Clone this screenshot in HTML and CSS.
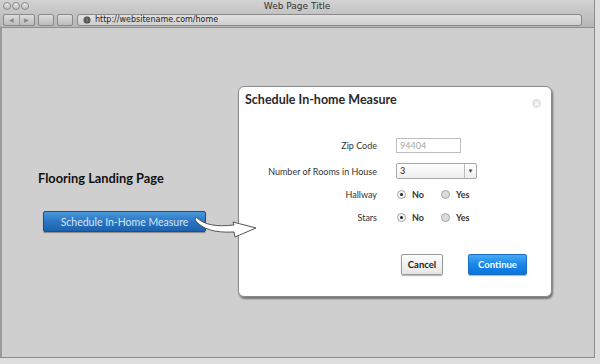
FILE: index.html
```html
<!DOCTYPE html>
<html lang="en">
<head>
  <meta charset="UTF-8">
  <title>Web Page Title</title>
  <link rel="stylesheet" href="styles.css">
</head>
<body>
  <div class="window">
    <div class="chrome">
      <div class="titlebar">
        <div class="lights"><span></span><span></span><span></span></div>
        <div class="title">Web Page Title</div>
        <div></div>
      </div>
      <div class="toolbar">
        <div class="nav"><span>&#9664;</span><span>&#9654;</span></div>
        <span class="tool"></span>
        <span class="tool"></span>
        <div class="url">
          <svg class="globe" width="8" height="8" viewBox="0 0 8 8"><circle cx="4" cy="4" r="3.5" fill="#444"/><path d="M1 3h6M1 5h6M4 0.5v7" stroke="#999" stroke-width="0.6"/></svg>
          http://websitename.com/home
        </div>
      </div>
    </div>

    <div class="content">
      <div class="landing">
        <h1>Flooring Landing Page</h1>
        <div class="cta-row">
          <button class="cta">Schedule In-Home Measure</button>
          <!-- arrow sits over the dialog edge -->
          <svg class="arrow" width="70" height="32" viewBox="0 0 70 32">
            <path d="M4,6 C12,14 24,16 42,14 L41,11 L64,17 L43,26 L42,21 C22,22 10,18 3,9 Z" fill="#fff" stroke="#555" stroke-width="1"/>
          </svg>
        </div>
      </div>

      <div class="modal">
        <div class="modal-head">
          <h2>Schedule In-home Measure</h2>
          <span class="close">&times;</span>
        </div>
        <div class="form">
          <div class="row first">
            <label>Zip Code</label>
            <div class="input">94404</div>
          </div>
          <div class="row">
            <label>Number of Rooms in House</label>
            <div class="select"><span class="value">3</span><span class="caret">&#9660;</span></div>
          </div>
          <div class="row">
            <label>Hallway</label>
            <div class="radios">
              <span class="option"><span class="radio checked"></span>No</span>
              <span class="option"><span class="radio"></span>Yes</span>
            </div>
          </div>
          <div class="row">
            <label>Stars</label>
            <div class="radios">
              <span class="option"><span class="radio checked"></span>No</span>
              <span class="option"><span class="radio"></span>Yes</span>
            </div>
          </div>
        </div>
        <div class="actions">
          <button class="btn cancel">Cancel</button>
          <button class="btn continue">Continue</button>
        </div>
      </div>
    </div>
  </div>
</body>
</html>
```

FILE: styles.css
```css
body {
  margin: 0;
  padding: 0;
  background-color: #dedede;
  font-family: Lato, "Open Sans", sans-serif;
  color: #222;
}

.window {
  width: 594px;
  height: 357px;
  border-right: 1px solid #8c8c8c;
  border-bottom: 1px solid #8c8c8c;
  display: flex;
  flex-direction: column;
  background-color: #cfcfcf;
}

.chrome {
  background: linear-gradient(#d2d2d2, #b6b6b6);
  border-bottom: 1px solid #8f8f8f;
}

.titlebar {
  height: 12px;
  display: grid;
  grid-template-columns: 1fr auto 1fr;
  align-items: center;
}

.lights {
  display: flex;
  gap: 1px;
  padding-left: 3px;
}

.lights span {
  width: 6px;
  height: 6px;
  border-radius: 50%;
  border: 1px solid #8a8a8a;
  background: linear-gradient(#e8e8e8, #bdbdbd);
}

.title {
  font-size: 9px;
  color: #333;
  font-family: "DejaVu Sans", sans-serif;
}

.toolbar {
  height: 15px;
  display: flex;
  align-items: center;
  padding: 0 3px;
  gap: 3px;
}

.nav {
  display: flex;
  width: 30px;
  height: 10px;
  border: 1px solid #8a8a8a;
  border-radius: 2px;
  background: linear-gradient(#dcdcdc, #bcbcbc);
}

.nav span {
  flex: 1;
  font-size: 6px;
  color: #888;
  text-align: center;
  line-height: 10px;
}

.nav span + span {
  border-left: 1px solid #9a9a9a;
}

.tool {
  width: 14px;
  height: 10px;
  border: 1px solid #8a8a8a;
  border-radius: 2px;
  background: linear-gradient(#dcdcdc, #bcbcbc);
}

.url {
  flex: 1;
  height: 10px;
  margin-left: 1px;
  margin-right: 9px;
  border: 1px solid #8a8a8a;
  border-radius: 3px;
  background: linear-gradient(#e2e2e2, #cfcfcf);
  display: flex;
  align-items: center;
  gap: 4px;
  padding-left: 5px;
  font-size: 8px;
  color: #222;
  font-family: "DejaVu Sans", sans-serif;
}

.content {
  flex: 1;
  display: flex;
  align-items: flex-start;
  border-left: 2px solid #9a9a9a;
}

.landing {
  width: 200px;
  padding-left: 36px;
  padding-top: 142px;
}

.landing h1 {
  margin: 0;
  font-size: 12.8px;
  line-height: 16px;
  font-weight: bold;
  color: #111;
}

.cta-row {
  display: flex;
  align-items: flex-start;
  margin-top: 25px;
  margin-left: 5px;
}

.cta {
  flex: none;
  width: 163px;
  height: 21px;
  border: 1px solid #1d4f86;
  border-radius: 2px;
  background: linear-gradient(#4a98dc, #2a76c4 50%, #1d62ad);
  color: #d7e7f6;
  font-family: Lato, sans-serif;
  font-size: 10.5px;
  padding: 0;
  box-shadow: 0 1px 1px rgba(0, 0, 0, 0.35);
}

.arrow {
  flex: none;
  margin-left: -14px;
  position: relative;
  z-index: 2;
}

.modal {
  width: 312px;
  height: 209px;
  margin-top: 58px;
  background-color: #fff;
  border: 1px solid #8a8a8a;
  border-radius: 6px;
  box-shadow: 1px 2px 2px rgba(0, 0, 0, 0.45);
  display: flex;
  flex-direction: column;
}

.modal-head {
  display: flex;
  justify-content: space-between;
  align-items: flex-start;
  padding: 5px 10px 0 6px;
}

.modal-head h2 {
  margin: 0;
  font-size: 12.5px;
  line-height: 16px;
  font-weight: bold;
  color: #2a2a2a;
}

.close {
  width: 9px;
  height: 9px;
  margin-top: 7px;
  border-radius: 50%;
  background-color: #e2e2e2;
  color: #fff;
  font-size: 9px;
  line-height: 9px;
  text-align: center;
  font-weight: bold;
}

.form {
  margin-top: 29px;
}

.row {
  display: flex;
  align-items: center;
  height: 16px;
  margin-bottom: 7px;
  font-size: 9px;
  color: #333;
}

.row.first {
  margin-bottom: 10px;
}

.row label {
  width: 138px;
  text-align: right;
  margin-right: 19px;
}

.input {
  width: 60px;
  height: 13px;
  line-height: 13px;
  border: 1px solid #bdbdbd;
  padding-left: 3px;
  color: #aaa;
}

.select {
  width: 79px;
  height: 14px;
  border: 1px solid #a8a8a8;
  border-radius: 2px;
  display: flex;
  background: linear-gradient(#fff, #eee);
}

.select .value {
  flex: 1;
  padding-left: 3px;
  line-height: 14px;
  color: #222;
}

.select .caret {
  width: 11px;
  border-left: 1px solid #bbb;
  font-size: 6px;
  line-height: 14px;
  text-align: center;
  color: #444;
}

.radios {
  display: flex;
  padding-left: 1px;
}

.option {
  display: flex;
  align-items: center;
  width: 44px;
  gap: 6px;
  font-weight: bold;
  color: #333;
}

.radio {
  width: 7px;
  height: 7px;
  border-radius: 50%;
  border: 1px solid #a5a5a5;
  background-color: #dcdcdc;
  position: relative;
}

.radio.checked {
  background-color: #f4f4f4;
}

.radio.checked::after {
  content: "";
  position: absolute;
  left: 2px;
  top: 2px;
  width: 3px;
  height: 3px;
  border-radius: 50%;
  background-color: #222;
}

.actions {
  display: flex;
  justify-content: flex-end;
  gap: 25px;
  padding-right: 24px;
  margin-top: 22px;
}

.btn {
  height: 21px;
  padding: 0;
  border-radius: 2px;
  font-family: Lato, sans-serif;
  font-size: 9.5px;
  font-weight: bold;
}

.cancel {
  width: 42px;
  border: 1px solid #9a9a9a;
  background: linear-gradient(#fdfdfd, #e6e6e6);
  color: #222;
  box-shadow: 0 1px 1px rgba(0, 0, 0, 0.3);
}

.continue {
  width: 59px;
  border: 1px solid #1a6fc0;
  background: linear-gradient(#48aaf2, #1886ea 50%, #0c74db);
  color: #fff;
  box-shadow: 0 1px 1px rgba(0, 0, 0, 0.3);
}
```
